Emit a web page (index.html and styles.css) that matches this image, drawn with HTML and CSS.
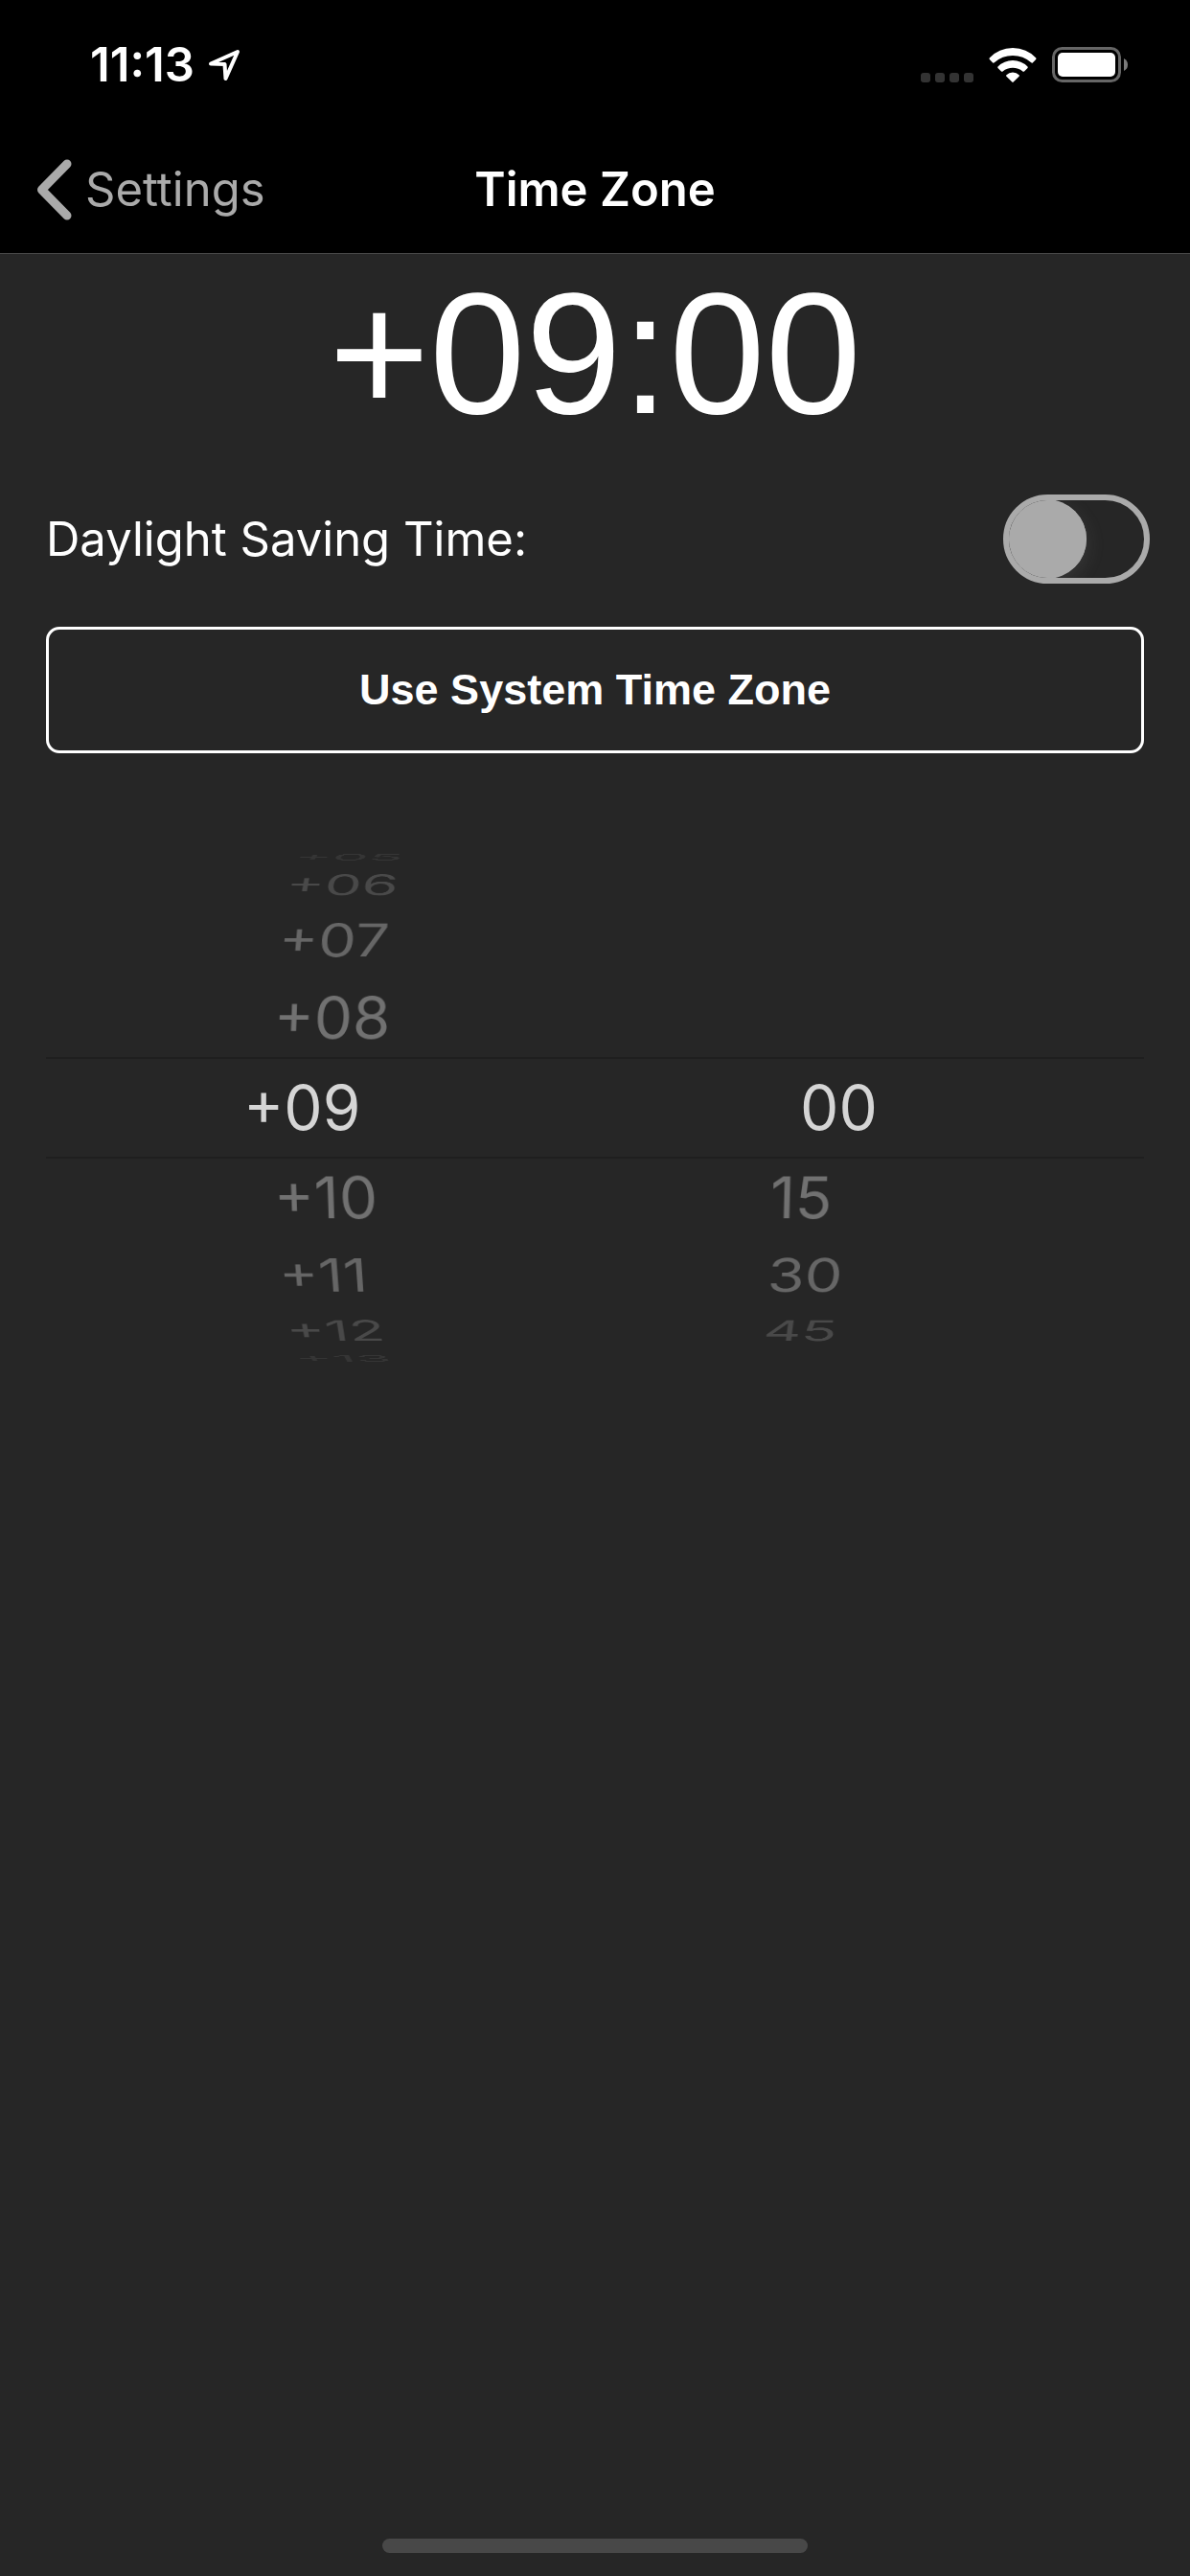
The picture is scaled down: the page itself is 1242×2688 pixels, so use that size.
FILE: index.html
```html
<!DOCTYPE html>
<html lang="en">
<head>
<meta charset="utf-8">
<meta name="viewport" content="width=device-width, initial-scale=1">
<title>Time Zone</title>
<link rel="stylesheet" href="styles.css">
</head>
<body>
<div class="screen">
  <header class="top">
    <div class="status">
      <div class="status-side">
        <span class="clock">11:13</span>
        <svg class="location" width="34" height="34" viewBox="0 0 34 34" aria-hidden="true"><path d="M3 15.500 31 3 18.500 31 17.500 16Z" fill="none" stroke="#fff" stroke-width="4" stroke-linejoin="round"/></svg>
      </div>
      <div class="status-icons">
        <svg width="55" height="36" viewBox="0 0 55 36" aria-hidden="true"><g fill="#333"><rect y="26" width="10" height="10" rx="3"/><rect x="15" y="26" width="10" height="10" rx="3"/><rect x="30" y="26" width="10" height="10" rx="3"/><rect x="45" y="26" width="10" height="10" rx="3"/></g></svg>
        <svg class="wifi" width="50" height="36" viewBox="0 0 50 36" aria-hidden="true"><g fill="#fff"><path d="M.700 10.500Q10.500 0 25 0T49.300 10.500Q49.800 11.300 49.200 12L45.800 15.400Q45 16 44.200 15.300 36 8 25 8T5.800 15.300Q5 16 4.200 15.400L.800 12Q.200 11.300.700 10.500Z"/><path d="M9.500 19.500Q16 13 25 13T40.500 19.500Q41.100 20.200 40.500 20.900L37 24.400Q36.200 25 35.400 24.400 31 20.800 25 20.800T14.600 24.400Q13.800 25 13 24.400L9.500 20.900Q8.900 20.200 9.500 19.500Z"/><path d="M18.400 28.300Q21 25.500 25 25.500T31.600 28.300Q32.200 29 31.600 29.700L25.700 35.600Q25 36.200 24.300 35.600L18.400 29.700Q17.800 29 18.400 28.300Z"/></g></svg>
        <svg width="80" height="37" viewBox="0 0 80 37" aria-hidden="true"><rect x="1.500" y="1.500" width="69" height="34" rx="9" fill="none" stroke="#666" stroke-width="3"/><rect x="6" y="6" width="60" height="25" rx="5" fill="#fff"/><path d="M75 12Q79 14 79 18.500T75 25Z" fill="#7b7b7b"/></svg>
      </div>
    </div>
    <nav class="nav">
      <a class="back" href="#">
        <svg width="37" height="64" viewBox="0 0 37 64" aria-hidden="true"><path d="M32 5 5.500 32 32 59" fill="none" stroke="#aaa" stroke-width="9" stroke-linecap="round" stroke-linejoin="round"/></svg>
        <span>Settings</span>
      </a>
      <h1 class="title">Time Zone</h1>
    </nav>
  </header>
  <main class="content">
    <p class="offset">+09:00</p>
    <div class="setting">
      <label for="dst">Daylight Saving Time:</label>
      <input class="switch" id="dst" type="checkbox" role="switch">
    </div>
    <button class="system" type="button">Use System Time Zone</button>
    <div class="picker">
      <div class="band"></div>
      <ul class="wheel hours" role="listbox" aria-label="Hours">
        <li class="row edge" role="option" style="--step:4">+05</li>
        <li class="row far" role="option" style="--step:3">+06</li>
        <li class="row mid" role="option" style="--step:2">+07</li>
        <li class="row near" role="option" style="--step:1">+08</li>
        <li class="row selected" role="option" aria-selected="true" style="--step:0">+09</li>
        <li class="row near" role="option" style="--step:-1">+10</li>
        <li class="row mid" role="option" style="--step:-2">+11</li>
        <li class="row far" role="option" style="--step:-3">+12</li>
        <li class="row edge" role="option" style="--step:-4">+13</li>
      </ul>
      <ul class="wheel minutes" role="listbox" aria-label="Minutes">
        <li class="row selected" role="option" aria-selected="true" style="--step:0">00</li>
        <li class="row near" role="option" style="--step:-1">15</li>
        <li class="row mid" role="option" style="--step:-2">30</li>
        <li class="row far" role="option" style="--step:-3">45</li>
      </ul>
    </div>
  </main>
  <div class="home"></div>
</div>
</body>
</html>
```
FILE: styles.css
```css
* { box-sizing: border-box; }

body {
  margin: 0;
  background: #262626;
  color: #fff;
  font-family: Inter, "Liberation Sans", sans-serif;
  font-size: 49px;
}

.screen {
  display: flex;
  flex-direction: column;
  min-height: 100vh;
}

.top {
  background: #000;
  border-bottom: 1px solid #484848;
}

.status {
  display: flex;
  align-items: center;
  justify-content: space-between;
  height: 132px;
  padding: 3px 64px 0 94px;
}

.status-side {
  display: flex;
  align-items: center;
  gap: 14px;
}

.clock {
  font-size: 49px;
  font-weight: 600;
  line-height: 56px;
}

.status-icons {
  display: flex;
  align-items: center;
  gap: 16px;
}

.nav {
  display: grid;
  grid-template-columns: 1fr auto 1fr;
  align-items: center;
  height: 132px;
  padding: 0 38px;
}

.back {
  display: flex;
  align-items: center;
  gap: 14px;
  color: #aaa;
  line-height: 64px;
  text-decoration: none;
}

.title {
  margin: 0;
  font-size: 49px;
  font-weight: 600;
  line-height: 64px;
}

.content {
  display: flex;
  flex-direction: column;
  padding: 0 48px;
}

.offset {
  margin: 0;
  font-family: "Liberation Sans", sans-serif;
  font-size: 180px;
  line-height: 208px;
  text-align: center;
}

.setting {
  display: flex;
  align-items: center;
  justify-content: space-between;
  margin-top: 43px;
  margin-right: -6px;
}

.switch {
  appearance: none;
  display: flex;
  width: 153px;
  height: 93px;
  margin: 0;
  border: 6px solid #aaa;
  border-radius: 999px;
  overflow: hidden;
}

.switch::before {
  content: "";
  width: 81px;
  height: 81px;
  border-radius: 50%;
  background: #aaa;
  box-shadow: 0 6px 20px rgba(170, 170, 170, 0.15), -1px 0 0 1px #aaa;
}

.switch:checked { justify-content: flex-end; }

.system {
  height: 132px;
  margin-top: 45px;
  border: 3px solid #fff;
  border-radius: 14px;
  background: none;
  color: #fff;
  font-family: "Liberation Sans", sans-serif;
  font-size: 45px;
  font-weight: 700;
}

/* Both wheels are cylinders seen through one shared perspective. */
.picker {
  display: grid;
  grid-template-columns: 1fr 1fr;
  align-items: center;
  height: 648px;
  margin-top: 46px;
  perspective: 2900px;
}

.band {
  grid-area: 1 / 1 / 2 / 3;
  height: 106px;
  border: solid #1f1f1f;
  border-width: 2px 0;
}

.wheel {
  display: grid;
  margin: 0;
  padding: 0;
  list-style: none;
  transform: translateZ(-290px);
  transform-style: preserve-3d;
}

.hours { grid-area: 1 / 1; }
.minutes { grid-area: 1 / 2; }

.row {
  grid-area: 1 / 1;
  padding-left: 236px;
  font-size: 64px;
  line-height: 100px;
  transform: rotateX(calc(var(--step) * 19deg)) translateZ(290px);
}

.minutes .row { padding-left: 184px; }
.hours .selected { padding-left: 206px; }
.minutes .selected { padding-left: 214px; }

.selected { color: #d5d5d5; }
.near { color: #717171; }
.mid { color: #666; }
.far { color: #494949; }
.edge { color: #353535; }

.home {
  align-self: center;
  width: 444px;
  height: 15px;
  margin-top: auto;
  margin-bottom: 24px;
  border-radius: 8px;
  background: #484848;
}
```
